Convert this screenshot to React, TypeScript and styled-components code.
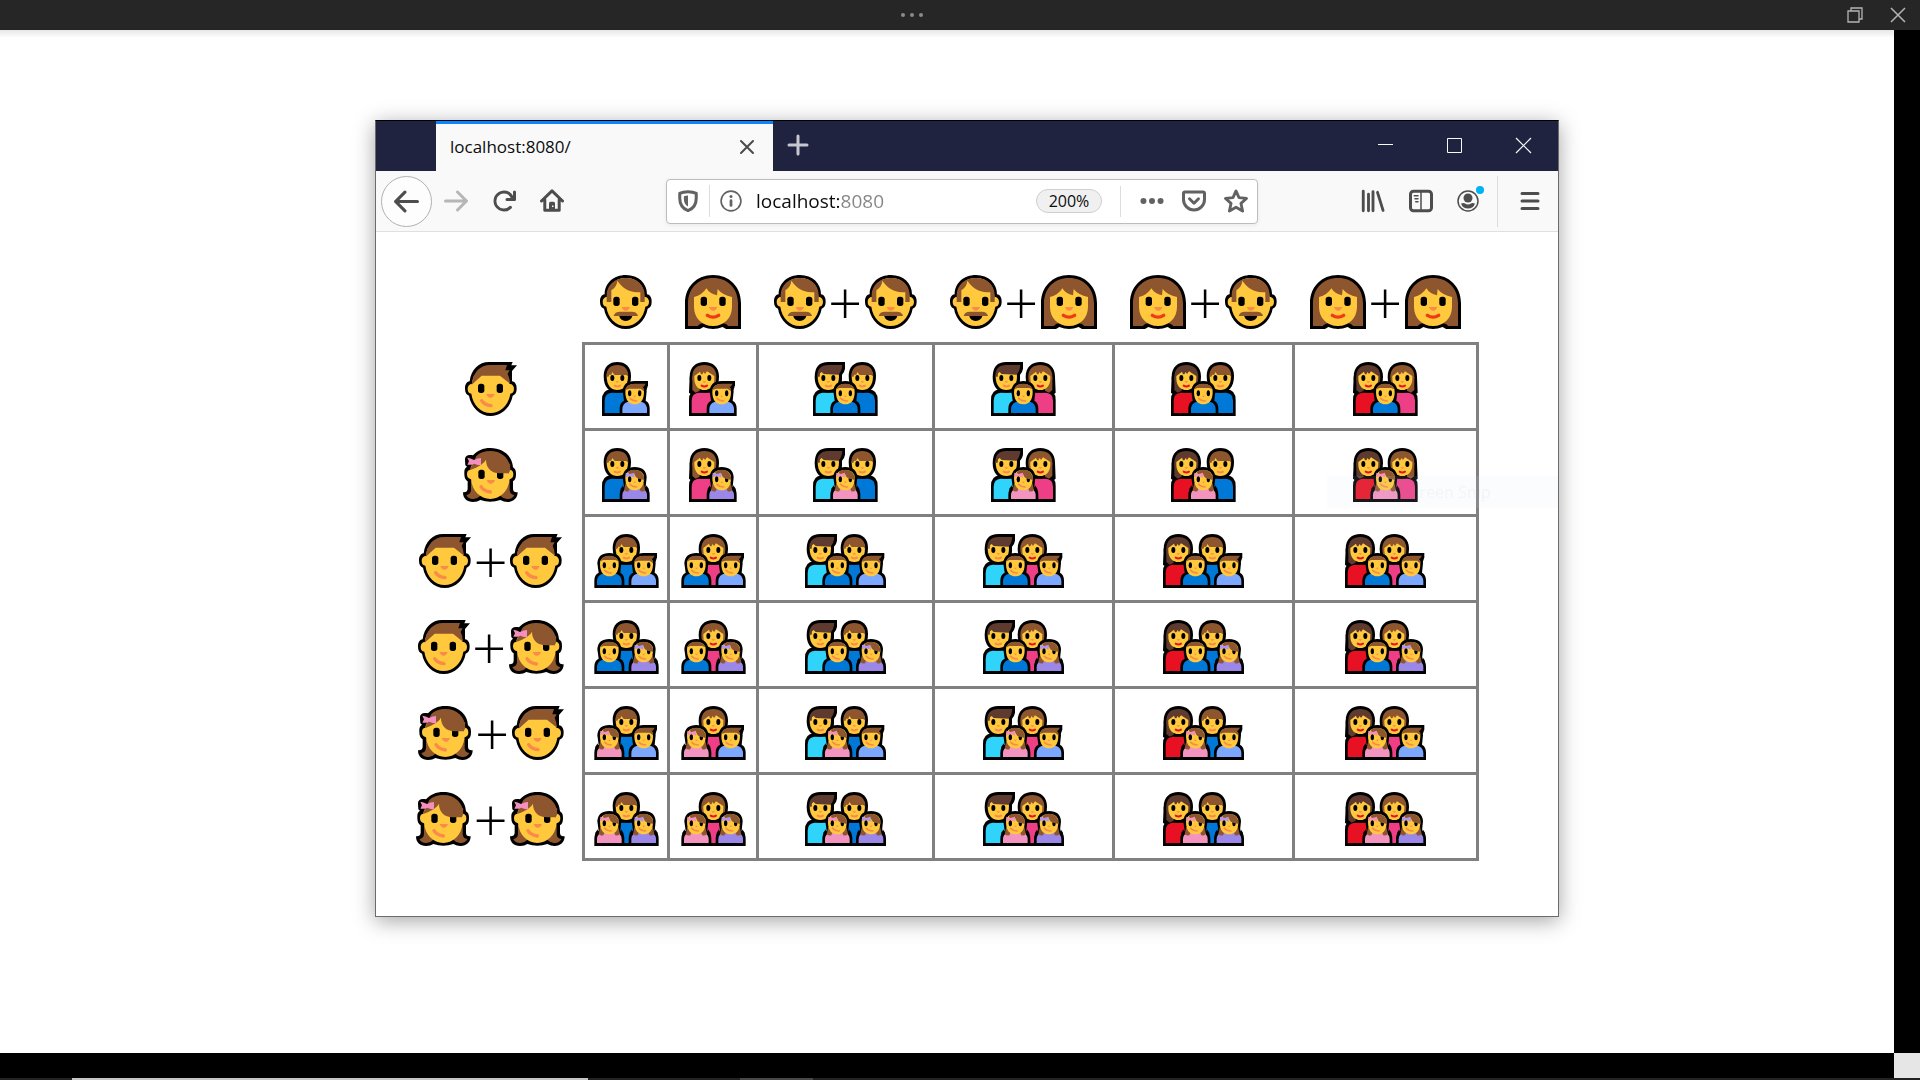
import React from "react";
import styled, { createGlobalStyle, css } from "styled-components";

const GlobalStyle = createGlobalStyle`
  *, *::before, *::after { box-sizing: border-box; }
  body {
    margin: 0;
    background: #000;
    font-family: "Open Sans", "Noto Sans", sans-serif;
  }
  button {
    font: inherit;
    color: inherit;
    padding: 0;
    border: 0;
    background: none;
    cursor: pointer;
  }
`;

/* ---------- outer viewer ---------- */

const Screen = styled.div`
  display: flex;
  flex-direction: column;
  min-height: 100vh;
  background: #000;
`;

const ViewerBar = styled.header`
  display: flex;
  height: 30px;
  background: #262626;
  color: #b4b4b4;
`;

const ViewerGrip = styled.div`
  flex: 1;
  display: flex;
  justify-content: center;
`;

const ViewerControls = styled.div`
  display: flex;
  padding: 0 1px 0 9px;
`;

const ViewerButton = styled.button`
  display: grid;
  place-items: center;
  width: 43px;
  height: 30px;
`;

const Body = styled.div`
  flex: 1;
  display: grid;
  grid-template-columns: 1fr 26px;
  grid-template-rows: 1fr 25px;
`;

const Canvas = styled.main`
  padding: 90px 335px 24px 375px;
  background: linear-gradient(#e6e6e6, #fff 8px) #fff;
`;

const Corner = styled.div`
  grid-column: 2;
  grid-row: 2;
  background: #e6e6e6;
`;

const TaskStrip = styled.footer`
  display: flex;
  height: 2px;
  padding-left: 72px;
  gap: 152px;
  background: #232122;
`;

const TaskMark = styled.span<{ $width: number; $tone: string }>`
  width: ${(p) => p.$width}px;
  background: ${(p) => p.$tone};
`;

/* ---------- browser window ---------- */

const BrowserWindow = styled.section`
  position: relative;
  border: 1px solid #6b6b6b;
  border-top-color: #000;
  background: #fff;
  box-shadow: 0 4px 20px rgba(0, 0, 0, 0.36);
`;

const TitleBar = styled.div`
  display: flex;
  height: 50px;
  padding-left: 60px;
  background: #20233f;
  color: #f9f9fa;
`;

const Tab = styled.div`
  display: flex;
  align-items: center;
  justify-content: space-between;
  width: 337px;
  padding: 0 14px 2px;
  border-top: 3px solid #0a84ff;
  background: #f9f9fa;
  color: #0c0c0d;
  font-size: 17px;
  line-height: 24px;
`;

const SmallButton = styled.button`
  display: grid;
  place-items: center;
  width: 24px;
  height: 24px;
  color: #4a4a4b;
`;

const NewTab = styled.button`
  display: grid;
  place-items: center;
  width: 50px;
  padding-bottom: 2px;
  color: #c7c8cf;
`;

const WindowControls = styled.div`
  display: flex;
  margin-left: auto;
`;

const WindowButton = styled.button`
  display: grid;
  place-items: center;
  width: 69px;
  padding-bottom: 2px;
`;

const Toolbar = styled.nav`
  display: flex;
  align-items: center;
  height: 61px;
  padding: 0 4px 0 5px;
  border-bottom: 1px solid #e0e0e1;
  background: #f9f9fa;
  color: #4d4d4e;
`;

const ToolButton = styled.button<{ $round?: boolean; $faded?: boolean }>`
  display: grid;
  place-items: center;
  width: 48px;
  height: 48px;
  ${(p) => p.$faded && css`color: #b6b6b7;`}
  ${(p) =>
    p.$round &&
    css`
      width: 51px;
      height: 51px;
      border: 1px solid #b1b1b3;
      border-radius: 50%;
      background: #fdfdfd;
    `}
`;

const AddressBar = styled.form`
  flex: 1;
  display: flex;
  align-items: center;
  height: 45px;
  min-width: 0;
  margin: 0 91px 0 90px;
  border: 1px solid #bcbcbd;
  border-radius: 4px;
  background: #fff;
  color: #626263;
  box-shadow: 0 1px 4px rgba(0, 0, 0, 0.07);
`;

const FieldButton = styled.button`
  display: grid;
  place-items: center;
  width: 42px;
  height: 42px;
`;

const PageActions = styled.div`
  display: flex;
  padding-left: 10px;
`;

const Divider = styled.span<{ $height: number }>`
  width: 1px;
  height: ${(p) => p.$height}px;
  background: #dcdcdd;
`;

const AddressInput = styled.input`
  flex: 1;
  min-width: 0;
  height: 32px;
  padding: 0;
  margin-left: 4px;
  border: 0;
  outline: 0;
  color: #0c0c0d;
  font-family: inherit;
  font-size: 19px;
  line-height: 32px;
  background: linear-gradient(90deg, #0c0c0d 85px, #858586 85px);
  background-clip: text;
  -webkit-background-clip: text;
  -webkit-text-fill-color: transparent;
`;

const ZoomButton = styled.button`
  height: 24px;
  width: 66px;
  margin-right: 18px;
  border: 1px solid #cfcfd0;
  border-radius: 12px;
  background: #f0f0f0;
  color: #0c0c0d;
  font-size: 16px;
  line-height: 22px;
`;

const MenuDivider = styled(Divider)`
  margin: 0 8px 0 4px;
`;

const Page = styled.div`
  padding: 25px 24px 55px 24px;
`;

/* ---------- emoji table ---------- */

const FamilyTable = styled.table`
  border-collapse: collapse;
  font-size: 60px;
  line-height: 54px;
`;

const HeadCell = styled.th`
  height: 86px;
  padding: 6px 17px 0 16px;
  font-weight: 300;
`;

const Cell = styled.td`
  padding: 6px 0 0;
  border: 3px solid #808080;
`;

const Sum = styled.span`
  display: flex;
  justify-content: center;
  align-items: center;
`;

const Plus = styled.span`
  display: flex;
  justify-content: center;
  width: 39px;
  height: 54px;
`;

const Drawing = styled.svg`
  display: block;
  margin: 0 auto;
  flex: none;
`;

const FaceDrawing = styled(Drawing)`
  margin: 0;
`;

const SnipTip = styled.div`
  position: absolute;
  top: 355px;
  right: 0;
  width: 231px;
  padding-left: 46px;
  background: rgba(205, 222, 250, 0.1);
  color: rgba(120, 130, 160, 0.08);
  font-size: 16px;
  line-height: 32px;
  pointer-events: none;
`;

/* ---------- drawings ---------- */

const SKIN = "#ffc83d";
const BROWN = "#8e562e";
const DARK = "#5e3b2e";
const ORANGE = "#f98a4a";

type Person = "man" | "woman" | "boy" | "girl";

const HEAD_OUTER =
  "C14 25 40 0 78 0C116 0 141 25 141 58C151 60 155 68 155 80C155 92 150 98 143 101C137 135 110 162 77 162C45 162 18 135 12 101C5 98 0 92 0 80C0 68 4 60 14 58Z";
const HEAD_INNER =
  "M78 9C44 9 22 32 22 65C12 66 8 72 8 80C8 90 13 94 19 95C24 130 48 153 77 153C106 153 131 130 136 95C142 94 147 90 147 80C147 72 143 66 133 65C133 32 112 9 78 9Z";

const Eyes = ({ x }: { x: number }) => (
  <>
    <rect x={x} y="65" width="19" height="28" rx="8" />
    <rect x={x + 56} y="65" width="19" height="28" rx="8" />
    <path d={`M${x + 25} 96h25q-4 11-12.500 11t-12.500-11z`} fill={ORANGE} />
  </>
);

const faces: Record<Person, { width: number; art: React.ReactNode }> = {
  man: {
    width: 52,
    art: (
      <>
        <path d={"M14 58" + HEAD_OUTER} />
        <path d={HEAD_INNER} fill={SKIN} />
        <path
          d="M20 81V60C20 30 45 9 78 9S134 30 134 60V81H121V52C95 52 72 46 52 17C51 30 45 38 34 46V81Z"
          fill={BROWN}
        />
        <Eyes x={40} />
        <path d="M57 121H98Q93 138 77 138T57 121Z" />
        <path d="M41 123Q44 110 60 110H95Q111 110 114 123Z" fill={BROWN} />
      </>
    ),
  },
  woman: {
    width: 56,
    art: (
      <>
        <path d="M84 0C35 0 0 35 0 85V162H45L55 156Q84 168 113 156L123 162H168V85C168 35 133 0 84 0Z" />
        <path d="M84 9C40 9 9 40 9 85V153H38Q48 142 58 146H110Q120 142 130 153H159V85C159 40 128 9 84 9Z" fill={BROWN} />
        <path
          d="M27 66Q52 60 64 40Q74 56 96 61L98 42Q112 60 141 66V95C141 128 118 153 84 153S27 128 27 95Z"
          fill={SKIN}
        />
        <Eyes x={47} />
        <path d="M67 121Q84 132 101 121" fill="none" stroke="#f03a17" strokeWidth="10" strokeLinecap="round" />
      </>
    ),
  },
  boy: {
    width: 52,
    art: (
      <>
        <path d="M14 58C18 22 42 0 72 0H143L139 10H156L141 27V58C151 60 155 68 155 80C155 92 150 98 143 101C137 135 110 162 77 162C45 162 18 135 12 101C5 98 0 92 0 80C0 68 4 60 14 58Z" />
        <path
          d="M78 20C44 20 22 32 22 65C12 66 8 72 8 80C8 90 13 94 19 95C24 130 48 153 77 153C106 153 131 130 136 95C142 94 147 90 147 80C147 72 143 66 133 65C133 32 112 20 78 20Z"
          fill={SKIN}
        />
        <path d="M20 68C24 30 46 9 75 9H126L121 25H134L128 35Q134 48 135 65L105 41H50Z" fill={BROWN} />
        <Eyes x={39} />
        <path d="M50 116Q58 129 78 131" fill="none" stroke={ORANGE} strokeWidth="10" strokeLinecap="round" />
      </>
    ),
  },
  girl: {
    width: 55,
    art: (
      <>
        <path d="M82 0C60 0 42 8 30 22C14 18 5 24 6 36L7 52L12 56C3 62 4 70 4 78C4 90 8 96 14 100V120C14 130 10 133 0 133C0 152 12 162 30 162C40 162 46 160 52 156Q82 167 112 156C120 160 125 162 134 162C152 162 164 150 164 133C153 133 150 130 150 120V100C156 96 159 90 159 78C159 68 157 62 150 58C148 22 118 0 82 0Z" />
        <path d="M24 98V124C24 136 18 140 10 141Q16 154 32 153Q44 152 52 143L34 98Z" fill={BROWN} />
        <path d="M140 98V124C140 136 146 140 154 141Q148 154 132 153Q120 152 112 143L130 98Z" fill={BROWN} />
        <path
          d="M82 30C44 30 24 44 22 65C14 66 12 72 12 79C12 88 16 92 24 94C28 130 52 153 82 153S136 130 140 94C148 92 151 88 151 79C151 71 148 66 141 65Z"
          fill={SKIN}
        />
        <path d="M22 62L40 24Q56 9 82 9C116 9 142 32 142 66L136 76Q122 72 70 34Q62 52 22 66Z" fill={BROWN} />
        <Eyes x={46} />
        <path d="M69 33C68 60 85 76 110 76H138L142 50L110 20Z" fill={BROWN} />
        <path d="M13 29Q23 30 33 36Q44 30 54 30V52Q44 52 34 47Q24 52 13 50L18 40Z" fill="#f48fc0" />
        <path d="M54 116Q62 129 82 132" fill="none" stroke={ORANGE} strokeWidth="10" strokeLinecap="round" />
      </>
    ),
  },
};

const Face = ({ who }: { who: Person }) => (
  <FaceDrawing
    role="img"
    aria-label={who}
    width={faces[who].width}
    height="54"
    viewBox={`0 0 ${faces[who].width * 3} 162`}
  >
    {faces[who].art}
  </FaceDrawing>
);

/* Figures of a family drawing; each one is centred on x = 0 and stands on y = 162. */

type Place = "left" | "middle" | "right";

const Torso = ({ fill }: { fill: string }) => (
  <>
    <path d="M-46 162V114Q-46 84 -20 82H20Q46 84 46 114V162Z" />
    <path d="M-38 153V116Q-38 93 -17 92H17Q38 93 38 116V153Z" fill={fill} />
  </>
);

const AdultFace = ({ lips }: { lips: string }) => (
  <>
    <ellipse cx="-15" cy="48" rx="6" ry="9" />
    <ellipse cx="15" cy="48" rx="6" ry="9" />
    <path d="M-6 58H6L0 63Z" fill={ORANGE} />
    <path d="M-8 71Q0 76 8 71" fill="none" stroke={lips} strokeWidth="6" strokeLinecap="round" />
  </>
);

const Father = ({ first }: { first: boolean }) => (
  <>
    <Torso fill={first ? "#30d3fa" : "#0078d7"} />
    {first ? (
      <path d="M-41 45Q-41 0 0 0H50V20Q48 32 41 38V52C41 78 24 92 0 92S-41 76 -41 45Z" />
    ) : (
      <path d="M-41 42C-41 14 -24 0 0 0S41 14 41 42C41 76 24 92 0 92S-41 76 -41 42Z" />
    )}
    <path d="M-32 42Q-32 16 0 16T32 42C32 72 18 84 0 84S-32 72 -32 42Z" fill={SKIN} />
    {first ? (
      <path d="M-33 44Q-34 9 0 9H42Q40 30 30 38L-14 36L-20 30L-25 34L-26 44Z" fill={DARK} />
    ) : (
      <path d="M-33 44C-33 20 -20 9 0 9S33 20 33 44L27 39H-8L-15 30L-18 38H-24L-27 44Z" fill={BROWN} />
    )}
    <AdultFace lips={ORANGE} />
  </>
);

const Mother = ({ first, place }: { first: boolean; place: Place }) => {
  const flip = place === "right" ? "scale(-1 1)" : undefined;
  const hair = first ? DARK : BROWN;
  return (
    <>
      <Torso fill={first ? "#e81123" : "#ee3f86"} />
      <path d="M-44 44C-44 15 -25 0 0 0S44 15 44 44C44 76 26 92 0 92S-44 76 -44 44Z" />
      {place !== "middle" && (
        <g transform={flip}>
          <path d="M-44 44L-46 92L-38 98L-16 90V44Z" />
          <path d="M-36 44V84L-26 92L-14 86V44Z" fill={hair} />
        </g>
      )}
      <path d="M-36 44C-36 20 -21 9 0 9S36 20 36 44C36 62 30 74 22 78H-22C-30 74 -36 62 -36 44Z" fill={hair} />
      <path d="M-30 42L-13 29L-10 37L-6 37L-2 30L2 36L8 28L30 42V50C30 72 16 84 0 84S-30 72 -30 50Z" fill={SKIN} />
      <AdultFace lips="#e81123" />
    </>
  );
};

const Child = ({ girl, last }: { girl: boolean; last: boolean }) => {
  const shirt = girl ? (last ? "#9b87e8" : "#f394c0") : last ? "#7ba7ff" : "#0078d7";
  return (
    <>
      <path d="M-45 162V140Q-45 122 -32 116L-36 88Q-34 57 0 57T36 88L33 116Q45 122 45 140V162Z" />
      {!girl && last && <path d="M0 57H40V70Q38 78 35 84L20 90Z" />}
      <path d="M-37 153V142Q-36 124 -22 120H22Q36 124 37 142V153Z" fill={shirt} />
      {girl && (
        <>
          <path d="M-35 112L-42 122V134L-32 128Z" />
          <path d="M35 112L42 122V134L32 128Z" />
          <path d="M-27 104L-32 126Q-26 132 -18 130L-10 112Z" fill={BROWN} />
          <path d="M27 104L32 126Q26 132 18 130L10 112Z" fill={BROWN} />
        </>
      )}
      <path d="M-28 90Q-28 66 0 66T28 90C28 116 16 127 0 127S-28 116 -28 90Z" fill={SKIN} />
      {!girl && !last && <path d="M-27 82Q-22 65 0 65T27 82L18 78H-18Z" fill={BROWN} />}
      {!girl && last && <path d="M-28 84Q-24 65 0 65H33L27 74H22L28 80V88L18 80H-16Z" fill={BROWN} />}
      <ellipse cx="-15" cy="94" rx="5" ry="9" />
      <ellipse cx="15" cy="94" rx="5" ry="9" />
      {girl && (
        <>
          <path d="M-20 72Q-12 65 0 65Q28 66 29 96L20 94Q2 92 0 79L-14 84Z" fill={BROWN} />
          <path d="M-27 74L-14 78L-1 74V89L-14 84L-27 88Z" fill={last ? "#b095f5" : "#f48fc0"} />
        </>
      )}
      <path d="M-4 101H5L0 106Z" fill={ORANGE} />
      <path d="M-14 109Q-8 117 6 117" fill="none" stroke={ORANGE} strokeWidth="5" strokeLinecap="round" />
    </>
  );
};

const At = ({ x, children }: { x: number; children: React.ReactNode }) => (
  <g transform={`translate(${x} 0)`}>{children}</g>
);

const Family = ({ parents, kids }: { parents: Person[]; kids: Person[] }) => {
  const couple = parents.length === 2;
  const twins = kids.length === 2;
  const width = couple && twins ? 81 : couple || twins ? 65 : 48;
  const parentX = couple ? [46, 148] : [twins ? 97 : 46];
  const childX = couple ? [97, 198] : twins ? [46, 149] : [98];
  return (
    <Drawing
      role="img"
      aria-label={`Family: ${[...parents, ...kids].join(", ")}`}
      width={width}
      height="54"
      viewBox={`0 0 ${width * 3} 162`}
    >
      {parents.map((who, i) => {
        const first = couple && i === 0;
        const place: Place = couple ? (i === 0 ? "left" : twins ? "middle" : "right") : twins ? "middle" : "left";
        return (
          <At x={parentX[i]} key={i}>
            {who === "man" ? <Father first={first} /> : <Mother first={first} place={place} />}
          </At>
        );
      })}
      {kids.map((who, i) => (
        <At x={childX[i]} key={i}>
          <Child girl={who === "girl"} last={twins ? i === 1 : !couple} />
        </At>
      ))}
    </Drawing>
  );
};

const People = ({ list }: { list: Person[] }) => (
  <Sum>
    <Face who={list[0]} />
    {list.length > 1 && (
      <>
        <Plus>+</Plus>
        <Face who={list[1]} />
      </>
    )}
  </Sum>
);

const columns: Person[][] = [["man"], ["woman"], ["man", "man"], ["man", "woman"], ["woman", "man"], ["woman", "woman"]];
const rows: Person[][] = [["boy"], ["girl"], ["boy", "boy"], ["boy", "girl"], ["girl", "boy"], ["girl", "girl"]];

/* ---------- toolbar icons ---------- */

const Icon = ({ size = 24, children }: { size?: number; children: React.ReactNode }) => (
  <svg width={size} height={size} viewBox="0 0 16 16" fill="currentColor" aria-hidden="true">
    {children}
  </svg>
);

const line = { fill: "none", stroke: "currentColor", strokeLinecap: "round", strokeLinejoin: "round" } as const;

const ARROW =
  "M15 7H3.414l4.293-4.293a1 1 0 0 0-1.414-1.414l-6 6a1 1 0 0 0 0 1.414l6 6a1 1 0 0 0 1.414-1.414L3.414 9H15a1 1 0 0 0 0-2z";

export default function App() {
  return (
    <Screen>
      <GlobalStyle />
      <ViewerBar>
        <ViewerGrip>
          <ViewerButton aria-label="More">
            <svg width="24" height="6" viewBox="0 0 24 6" fill="#8a8a8a">
              <circle cx="3" cy="3" r="2" />
              <circle cx="12" cy="3" r="2" />
              <circle cx="21" cy="3" r="2" />
            </svg>
          </ViewerButton>
        </ViewerGrip>
        <ViewerControls>
          <ViewerButton aria-label="Restore">
            <svg width="16" height="16" viewBox="0 0 16 16" fill="none" stroke="currentColor" strokeWidth="1.300">
              <path d="M1 4H12V15H1ZM4 4V1H15V12H12" />
            </svg>
          </ViewerButton>
          <ViewerButton aria-label="Close">
            <svg width="16" height="16" viewBox="0 0 16 16" fill="none" stroke="currentColor" strokeWidth="1.500">
              <path d="M1 1L15 15M15 1L1 15" />
            </svg>
          </ViewerButton>
        </ViewerControls>
      </ViewerBar>

      <Body>
        <Canvas>
          <BrowserWindow>
            <TitleBar>
              <Tab>
                <span>localhost:8080/</span>
                <SmallButton aria-label="Close tab">
                  <svg width="16" height="16" viewBox="0 0 16 16" {...line} strokeWidth="2">
                    <path d="M2 2L14 14M14 2L2 14" />
                  </svg>
                </SmallButton>
              </Tab>
              <NewTab aria-label="New tab">
                <svg width="22" height="22" viewBox="0 0 22 22" {...line} strokeWidth="3">
                  <path d="M11 2V20M2 11H20" />
                </svg>
              </NewTab>
              <WindowControls>
                <WindowButton aria-label="Minimize">
                  <svg width="15" height="15" viewBox="0 0 15 15" stroke="currentColor">
                    <path d="M0 6.500H15" />
                  </svg>
                </WindowButton>
                <WindowButton aria-label="Maximize">
                  <svg width="15" height="15" viewBox="0 0 15 15" fill="none" stroke="currentColor">
                    <path d="M.5 .5H14.500V14.500H.5Z" />
                  </svg>
                </WindowButton>
                <WindowButton aria-label="Close window">
                  <svg width="17" height="17" viewBox="0 0 17 17" fill="none" stroke="currentColor" strokeWidth="1.200">
                    <path d="M1 1L16 16M16 1L1 16" />
                  </svg>
                </WindowButton>
              </WindowControls>
            </TitleBar>

            <Toolbar>
              <ToolButton $round aria-label="Back">
                <Icon size={25}><path d={ARROW} /></Icon>
              </ToolButton>
              <ToolButton $faded aria-label="Forward">
                <Icon><path d={ARROW} transform="translate(16 0) scale(-1 1)" /></Icon>
              </ToolButton>
              <ToolButton aria-label="Reload">
                <Icon>
                  <path d="M15 1a1 1 0 0 0-1 1v2.418A6.995 6.995 0 1 0 8 15a6.954 6.954 0 0 0 4.950-2.050 1 1 0 0 0-1.414-1.414A5.019 5.019 0 1 1 12.549 6H10a1 1 0 0 0 0 2h5a1 1 0 0 0 1-1V2a1 1 0 0 0-1-1z" />
                </Icon>
              </ToolButton>
              <ToolButton aria-label="Home">
                <Icon>
                  <path d="M1 8L8 1.300L15 8M3.200 7V14.200H12.800V7" {...line} strokeWidth="2" />
                  <path d="M6 14V9.500Q6 8.500 7 8.500H9Q10 8.500 10 9.500V14Z" />
                  <rect x="8" y="11" width="1" height="1" fill="#f9f9fa" />
                </Icon>
              </ToolButton>

              <AddressBar onSubmit={(e) => e.preventDefault()}>
                <FieldButton type="button" aria-label="Tracking protection">
                  <Icon size={22}>
                    <path d="M8 1.200C10.500 1.200 12.600 1.700 14 2.500V6C14 10.500 12 13.500 8 15C4 13.500 2 10.500 2 6V2.500C3.400 1.700 5.500 1.200 8 1.200Z" {...line} strokeWidth="2.200" />
                    <path d="M8 4V12C6 11 5 9 5 6.500V4.600Q6.500 4 8 4Z" />
                  </Icon>
                </FieldButton>
                <Divider $height={32} />
                <FieldButton type="button" aria-label="Site information">
                  <Icon size={22}>
                    <circle cx="8" cy="8" r="7.200" {...line} strokeWidth="1.200" />
                    <circle cx="8" cy="4.700" r="1.100" />
                    <rect x="7" y="6.800" width="2" height="5.400" rx="1" />
                  </Icon>
                </FieldButton>
                <AddressInput aria-label="Address" defaultValue="localhost:8080" spellCheck={false} />
                <ZoomButton type="button">200%</ZoomButton>
                <Divider $height={31} />
                <PageActions>
                  <FieldButton type="button" aria-label="Page actions">
                    <Icon>
                      <circle cx="2.300" cy="8" r="2" />
                      <circle cx="8" cy="8" r="2" />
                      <circle cx="13.700" cy="8" r="2" />
                    </Icon>
                  </FieldButton>
                  <FieldButton type="button" aria-label="Save to Pocket">
                    <Icon>
                      <path d="M8 15a8 8 0 0 1-8-8V3a2 2 0 0 1 2-2h12a2 2 0 0 1 2 2v4a8 8 0 0 1-8 8zm6-12H2v4a6 6 0 0 0 12 0zm-6 7.500a1 1 0 0 1-.707-.293l-3-3a1 1 0 0 1 1.414-1.414L8 8.086l2.293-2.293a1 1 0 0 1 1.414 1.414l-3 3A1 1 0 0 1 8 10.500z" />
                    </Icon>
                  </FieldButton>
                  <FieldButton type="button" aria-label="Bookmark this page">
                    <Icon>
                      <path d="M8 1.300L10 5.800L15 6.300L11.300 9.600L12.400 14.700L8 12.100L3.600 14.700L4.700 9.600L1 6.300L6 5.800Z" {...line} strokeWidth="1.900" />
                    </Icon>
                  </FieldButton>
                </PageActions>
              </AddressBar>

              <ToolButton aria-label="Library">
                <Icon>
                  <path d="M1.500 1.500V14.500M5 3.500V14.500M8 1.800V14.500M11 2.200L14.700 14.300" {...line} strokeWidth="1.900" />
                </Icon>
              </ToolButton>
              <ToolButton aria-label="Sidebars">
                <Icon>
                  <rect x="1" y="1.500" width="14" height="13" rx="2" {...line} strokeWidth="2" />
                  <path d="M8 2V14" stroke="currentColor" strokeWidth="1" />
                  <path d="M3.500 4.500H6M4 6.500H6M4.500 8.500H6" {...line} strokeWidth="1" />
                </Icon>
              </ToolButton>
              <ToolButton aria-label="Account">
                <svg width="30" height="34" viewBox="0 0 30 34" fill="currentColor">
                  <circle cx="14" cy="17" r="10" {...line} strokeWidth="1.500" />
                  <circle cx="14" cy="14" r="4.500" />
                  <path d="M7 19.500Q10 18.500 11 19.500Q14 21.500 17 19.500Q18 18.500 21 19.500Q19.500 24.500 14 24.500T7 19.500Z" />
                  <circle cx="26" cy="6" r="4" fill="#00b3f4" />
                </svg>
              </ToolButton>
              <MenuDivider $height={51} />
              <ToolButton aria-label="Menu">
                <svg width="20" height="20" viewBox="0 0 20 20" {...line} strokeWidth="3">
                  <path d="M2 2.500H18M2 10H18M2 17.500H18" />
                </svg>
              </ToolButton>
            </Toolbar>

            <Page>
              <FamilyTable>
                <thead>
                  <tr>
                    <td />
                    {columns.map((parents, i) => (
                      <HeadCell scope="col" key={i}>
                        <People list={parents} />
                      </HeadCell>
                    ))}
                  </tr>
                </thead>
                <tbody>
                  {rows.map((kids, r) => (
                    <tr key={r}>
                      <HeadCell scope="row">
                        <People list={kids} />
                      </HeadCell>
                      {columns.map((parents, c) => (
                        <Cell key={c}>
                          <Family parents={parents} kids={kids} />
                        </Cell>
                      ))}
                    </tr>
                  ))}
                </tbody>
              </FamilyTable>
            </Page>

            <SnipTip>Full-screen Snip</SnipTip>
          </BrowserWindow>
        </Canvas>
        <Corner />
      </Body>

      <TaskStrip>
        <TaskMark $width={516} $tone="#c6c4c3" />
        <TaskMark $width={73} $tone="#4a4747" />
      </TaskStrip>
    </Screen>
  );
}
